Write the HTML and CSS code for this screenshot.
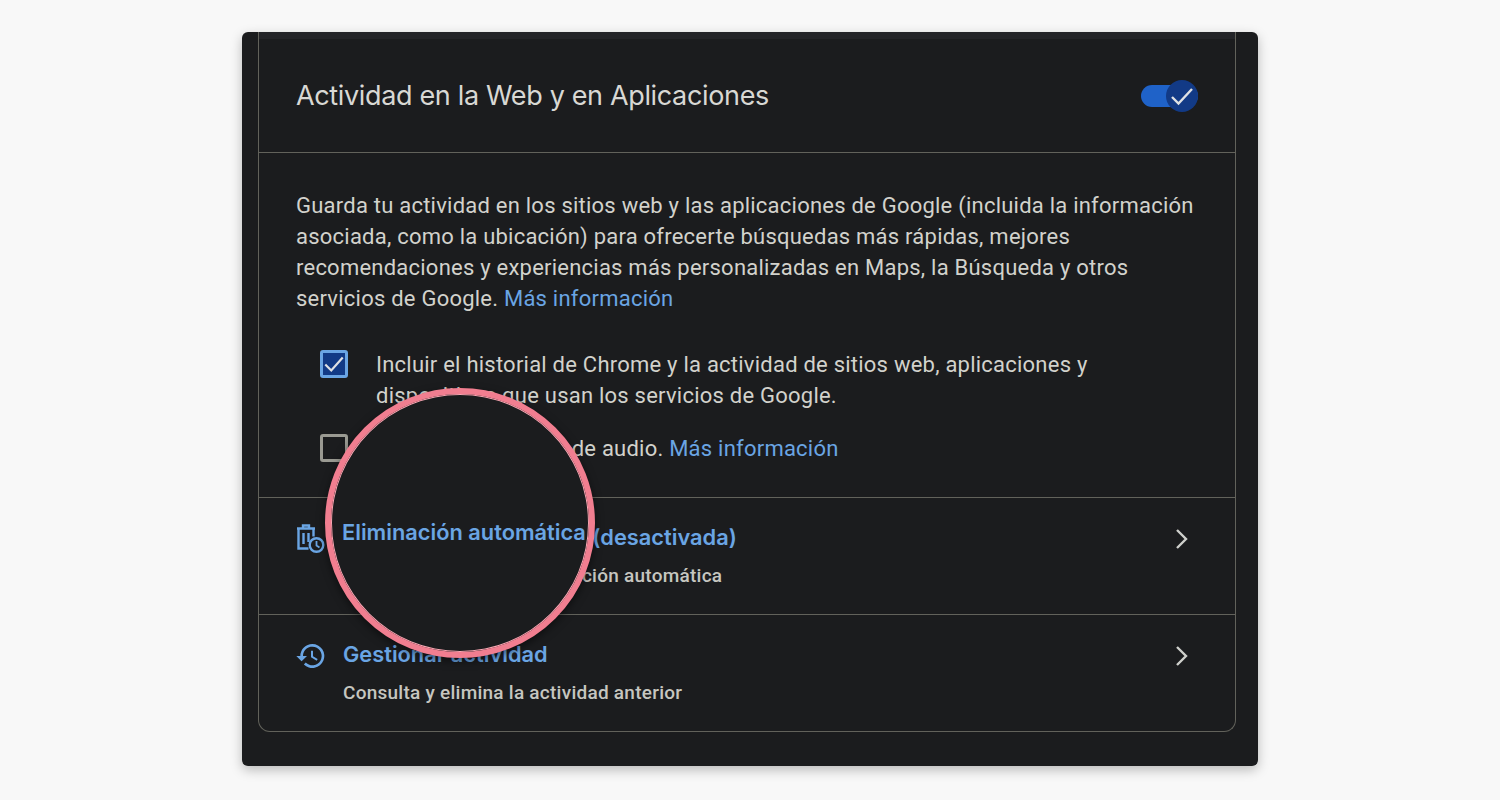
FILE: index.html
```html
<!DOCTYPE html>
<html lang="es">
<head>
<meta charset="UTF-8" />
<title>Actividad en la Web y en Aplicaciones</title>
<link rel="stylesheet" href="styles.css">
</head>
<body>

<div class="screen">
  <div class="panel">
    <div class="head">
      <h1>Actividad en la Web y en Aplicaciones</h1>
      <div class="toggle">
        <span class="knob">
          <svg width="24" height="24" viewBox="0 0 24 24"><path d="M2 13l6.500 6.500L22 5" fill="none" stroke="#dfe1e4" stroke-width="2.400"/></svg>
        </span>
      </div>
    </div>

    <div class="body">
      <p class="desc">Guarda tu actividad en los sitios web y las aplicaciones de Google (incluida la información asociada, como la ubicación) para ofrecerte búsquedas más rápidas, mejores recomendaciones y experiencias más personalizadas en Maps, la Búsqueda y otros servicios de Google. <a>Más información</a></p>

      <div class="opt">
        <span class="check on">
          <svg width="24" height="24" viewBox="0 0 24 24"><path d="M2.500 12.500l6.500 6.500L21.500 5" fill="none" stroke="#dfe1e4" stroke-width="2.400"/></svg>
        </span>
        <p>Incluir el historial de Chrome y la actividad de sitios web, aplicaciones y dispositivos que usan los servicios de Google.</p>
      </div>
      <div class="opt second">
        <span class="check"></span>
        <p>Incluir grabaciones de audio. <a>Más información</a></p>
      </div>
    </div>

    <div class="row">
      <svg class="row-icon" width="30" height="30" viewBox="0 0 30 30" fill="none" stroke="#6aa5e4" stroke-width="2.400">
        <path d="M1 4.500h18M7 4V1.500h6V4M2.500 4.500v20h10M17.500 4.500v8M7.500 9v11M12.500 9v9"/>
        <circle cx="20.500" cy="21" r="6.800"/>
        <path d="M20.500 17v4.500l3 2" stroke-width="1.800"/>
      </svg>
      <div class="row-text">
        <h2>Eliminación automática (desactivada)</h2>
        <p>Elige una opción de eliminación automática</p>
      </div>
      <svg class="chevron" width="16" height="24" viewBox="0 0 16 24"><path d="M3 3l9 9-9 9" fill="none" stroke="#cfd0cc" stroke-width="2.400"/></svg>
    </div>

    <div class="row">
      <svg class="row-icon history" width="32" height="32" viewBox="0 0 24 24" fill="#6aa5e4">
        <path d="M13 3a9 9 0 0 0-9 9H1l3.890 3.890.07.140L9 12H6a7 7 0 1 1 2.050 4.950l-1.420 1.420A9 9 0 1 0 13 3zm-1 5v5l4.280 2.540.72-1.210-3.500-2.080V8z"/>
      </svg>
      <div class="row-text">
        <h2>Gestionar actividad</h2>
        <p>Consulta y elimina la actividad anterior</p>
      </div>
      <svg class="chevron" width="16" height="24" viewBox="0 0 16 24"><path d="M3 3l9 9-9 9" fill="none" stroke="#cfd0cc" stroke-width="2.400"/></svg>
    </div>
  </div>

  <div class="lens"><span>Eliminación automática</span></div>
</div>

</body>
</html>
```

FILE: styles.css
```css
body {margin:0; height:800px; background:#f8f8f8; font-family:Roboto, sans-serif; color:#d2d2cc; overflow:hidden;}
.screen {position:relative; width:1016px; height:734px; margin:32px 0 0 242px; padding:0 22px 0 16px; box-sizing:border-box; background:#1b1c1e; border-radius:6px; box-shadow:0 4px 12px rgba(0,0,0,0.25);}
.panel {height:700px; box-sizing:border-box; border:1px solid #62625b; border-top:none; border-radius:0 0 12px 12px; background:#1b1c1e;}
a {color:#6aa5e4;}

.head {height:121px; display:flex; justify-content:space-between; align-items:center; padding:7px 37px 0; border-bottom:1px solid #62625b; box-sizing:border-box; background:linear-gradient(#232428 7px, transparent 7px);}
.head h1 {margin:0; font-family:Inter, sans-serif; font-size:27px; font-weight:400; color:#d8d8d4; letter-spacing:-0.35px;}
.toggle {position:relative; width:57px; height:22px; background:#1f62c8; border-radius:11px;}
.knob {position:absolute; right:0; top:-5px; width:32px; height:32px; border-radius:50%; background:#123a86; display:flex; align-items:center; justify-content:center;}

.body {padding:37px 37px 0; height:345px; box-sizing:border-box; border-bottom:1px solid #62625b;}
.desc {margin:0 0 35px; font-size:22px; line-height:31px; letter-spacing:0.23px;}
.opt {display:flex; gap:28px; padding-left:24px;}
.opt p {margin:0; font-size:22px; line-height:31px; letter-spacing:0.23px; width:740px;}
.second {margin-top:22px;}
.check {flex:none; width:28px; height:28px; margin-top:1px; box-sizing:border-box; border:3px solid #9a9a92; border-radius:3px; display:flex; align-items:center; justify-content:center;}
.check.on {background:#123a86; border-color:#6aa5e4;}

.row {display:flex; align-items:flex-start; height:117px; padding:26px 45px 0 37px; box-sizing:border-box; border-bottom:1px solid #62625b;}
.row:last-child {border-bottom:none;}
.row-icon {flex:none; margin-right:17px;}
.row-icon.history {margin:-1px 16px 0 -1px;}
.row-text {flex:1;}
.row-text h2 {margin:0 0 14px; font-family:Inter, sans-serif; font-size:21.8px; font-weight:600; color:#6aa5e4;}
.row-text p {margin:0; font-size:19px; font-weight:500; letter-spacing:0.25px; color:#c6c6c0;}
.chevron {margin-top:3px;}

.lens {position:absolute; left:83px; top:356px; width:270px; height:270px; box-sizing:border-box; border:6px solid #f17e90; border-radius:50%; background:#1b1c1e; box-shadow:0 3px 8px rgba(0,0,0,0.5), inset 0 0 0 1px #f9a6b2;}
.lens span {position:absolute; left:11px; top:125px; white-space:nowrap; font-family:Inter, sans-serif; font-size:21.8px; font-weight:600; color:#6aa5e4;}
```
